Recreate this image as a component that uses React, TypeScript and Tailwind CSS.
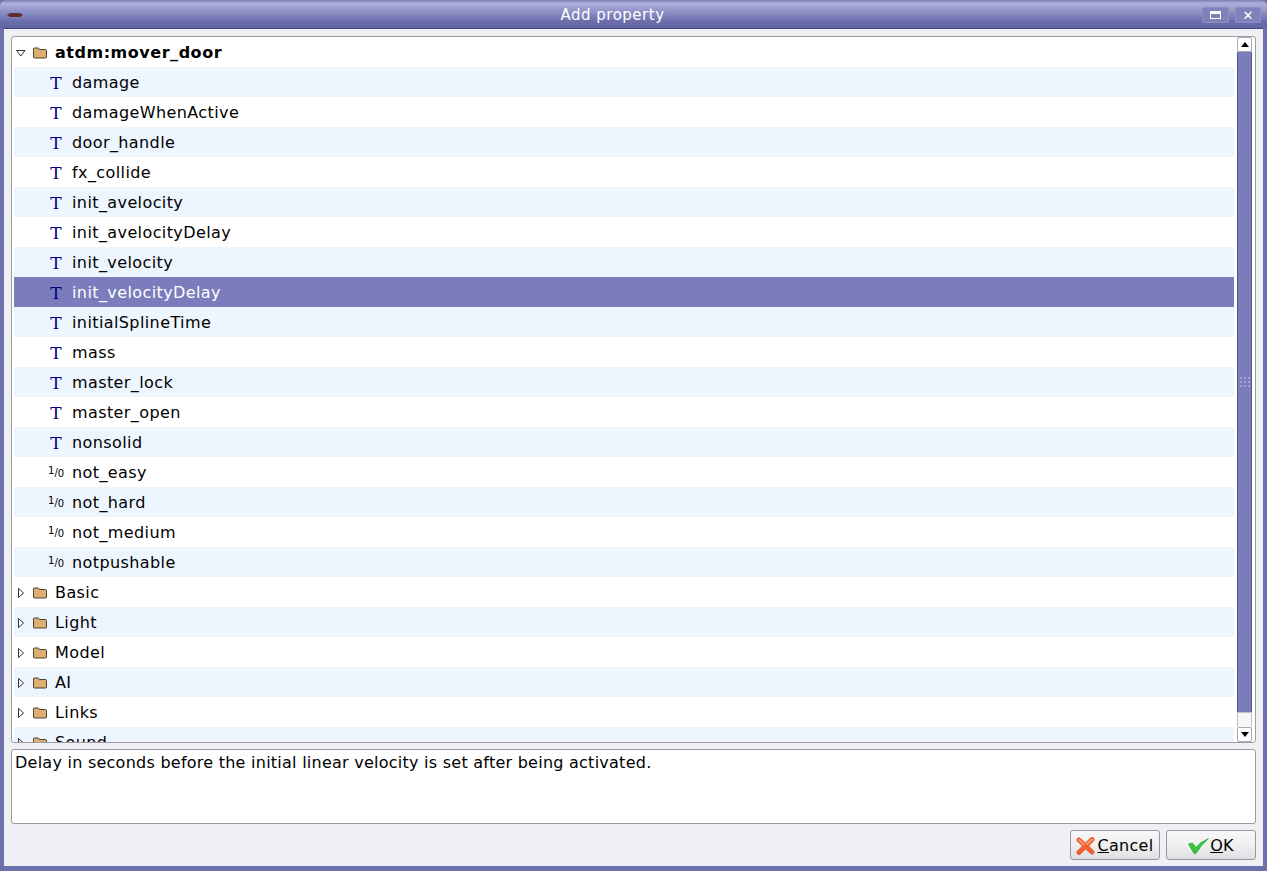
const font = "font-['DejaVu_Sans',sans-serif]";

type Prop = { name: string; kind: "text" | "bool" };

const props: Prop[] = [
  { name: "damage", kind: "text" },
  { name: "damageWhenActive", kind: "text" },
  { name: "door_handle", kind: "text" },
  { name: "fx_collide", kind: "text" },
  { name: "init_avelocity", kind: "text" },
  { name: "init_avelocityDelay", kind: "text" },
  { name: "init_velocity", kind: "text" },
  { name: "init_velocityDelay", kind: "text" },
  { name: "initialSplineTime", kind: "text" },
  { name: "mass", kind: "text" },
  { name: "master_lock", kind: "text" },
  { name: "master_open", kind: "text" },
  { name: "nonsolid", kind: "text" },
  { name: "not_easy", kind: "bool" },
  { name: "not_hard", kind: "bool" },
  { name: "not_medium", kind: "bool" },
  { name: "notpushable", kind: "bool" },
];

const groups = ["Basic", "Light", "Model", "AI", "Links", "Sound"];

function Folder() {
  return (
    <svg width="16" height="14" viewBox="0 0 16 14" className="shrink-0">
      <path
        d="M1.5 4.5 V3 Q1.5 2 2.5 2 H6 Q7 2 7.5 3.5 H13.5 Q14.5 3.5 14.5 4.5 V11 Q14.5 12 13.5 12 H2.5 Q1.5 12 1.5 11 Z"
        fill="#dcae70"
        stroke="#4a4030"
        strokeWidth="1"
      />
    </svg>
  );
}

function Arrow({ open }: { open?: boolean }) {
  return (
    <svg width="10" height="10" viewBox="0 0 10 10" className="shrink-0">
      {open ? (
        <path d="M0.5 2.5 H9 L4.8 8 Z" fill="#fff" stroke="#333" />
      ) : (
        <path d="M2.5 0.5 V9.5 L7.5 5 Z" fill="#fff" stroke="#333" />
      )}
    </svg>
  );
}

function Row({ index, selected, children }: { index: number; selected?: boolean; children: React.ReactNode }) {
  const bg = selected ? "bg-[#7a7cbc] text-white" : index % 2 === 1 ? "bg-[#edf5fe] text-black" : "bg-white text-black";
  return <div className={`h-[30px] shrink-0 pt-[2px] flex items-center ${bg}`}>{children}</div>;
}

function TypeIcon({ kind }: { kind: Prop["kind"] }) {
  if (kind === "text") {
    return (
      <span className="w-4 ml-[34px] mr-[8px] text-center text-[#000080] text-[17px] leading-none tracking-normal font-['DejaVu_Serif',serif]">
        T
      </span>
    );
  }
  return (
    <span className="w-4 ml-[34px] mr-[8px] text-center text-black text-[10px] leading-none tracking-normal whitespace-nowrap">
      <span className="relative -top-[2px]">1</span>
      <span>/</span>
      <span className="relative top-[1px]">0</span>
    </span>
  );
}

function Scrollbar() {
  return (
    <div className="w-[15px] ml-[3px] shrink-0 flex flex-col items-stretch bg-[#f2f3f6]">
      <div className="h-[15px] shrink-0 bg-white border border-[#a9a9ae] rounded-[2px] flex items-center justify-center">
        <div className="w-0 h-0 border-x-[4px] border-x-transparent border-b-[5px] border-b-black" />
      </div>
      <div className="h-[660px] shrink-0 bg-[#7a7cbc] border-x border-[#55568f] flex items-center justify-center">
        <div className="grid grid-cols-3 gap-[2px]">
          {Array.from({ length: 9 }).map((_, i) => (
            <div key={i} className="w-[2px] h-[2px] bg-[#9ea0d8]" />
          ))}
        </div>
      </div>
      <div className="flex-1 bg-[#f7f7fa] border-x border-t border-[#c0c0c6]" />
      <div className="h-[15px] shrink-0 bg-white border border-[#a9a9ae] rounded-[2px] flex items-center justify-center">
        <div className="w-0 h-0 border-x-[4px] border-x-transparent border-t-[5px] border-t-black" />
      </div>
    </div>
  );
}

function CrossIcon() {
  return (
    <svg width="19" height="18" viewBox="0 0 19 18" className="shrink-0 mr-[2px]">
      <path d="M3 3 L16 15 M16 2.5 L3 15.5" stroke="#ee5f34" strokeWidth="5" strokeLinecap="round" />
      <path d="M3 3 L8 7.5 M16 2.5 L11 7" stroke="#f79a6e" strokeWidth="2" strokeLinecap="round" />
    </svg>
  );
}

function CheckIcon() {
  return (
    <svg width="21" height="16" viewBox="0 0 21 16" className="shrink-0 mr-[1px]">
      <path d="M0.5 6 L4.5 5 L8 9.5 Q12 4 20.5 0.5 Q13 7 8 15.5 L6 15.5 Z" fill="#34c83c" stroke="#1e9a2a" strokeWidth="0.6" />
    </svg>
  );
}

function DialogButton({ children }: { children: React.ReactNode }) {
  return (
    <button className="w-[90px] h-[30px] pt-[2px] border border-[#98989e] rounded-[3px] bg-gradient-to-b from-[#f8f8f8] via-[#f0f0f0] to-[#dedfe2] flex items-center justify-center text-[16px] tracking-[0.3px] text-black">
      {children}
    </button>
  );
}

export default function App() {
  return (
    <div className={`w-[1267px] h-[871px] overflow-hidden flex flex-col bg-[#6d70ac] ${font}`}>
      {/* Title bar */}
      <div className="h-[28px] shrink-0 rounded-t-[6px] bg-[linear-gradient(180deg,#7c7eb4_0%,#aeb0da_12%,#9092c8_40%,#6c6fab_75%,#6164a2_100%)] flex items-center relative">
        <svg width="16" height="8" viewBox="0 0 16 8" className="ml-[7px] mt-[2px]">
          <path d="M0 4 L3 2 H13 L16 4 L13 6 H3 Z" fill="#5b2f2f" />
        </svg>
        <div className="absolute left-0 w-[1225px] top-[6px] text-center text-[15px] leading-[18px] text-white tracking-[0.5px]">
          Add property
        </div>
        <div className="ml-auto mr-[6px] mt-[2px] flex gap-[6px]">
          <div className="w-[27px] h-[16px] rounded-[2px] border border-[#8d8fc4] bg-[#7f82ba] flex items-center justify-center">
            <div className="w-[11px] h-[8px] border border-white border-t-[3px]" />
          </div>
          <div className="w-[26px] h-[16px] rounded-[2px] border border-[#8d8fc4] bg-[#7f82ba] flex items-center justify-center text-white text-[13px] leading-none font-bold">
            ✕
          </div>
        </div>
      </div>

      {/* Client area */}
      <div className="flex-1 mx-[4px] mb-[5px] min-h-0 border-t border-[#45477c] bg-[#eff0f4] px-[7px] pt-[7px] flex flex-col">
        <div className="h-[707px] shrink-0 flex border border-[#9b9ba0] rounded-[3px] bg-white pl-[2px] pr-[3px] overflow-hidden">
          <div className="w-[1220px] shrink-0 flex flex-col text-[16px] tracking-[0.4px] overflow-hidden">
            <Row index={0}>
              <div className="w-[14px] flex justify-center"><Arrow open /></div>
              <div className="ml-[4px] mr-[7px]"><Folder /></div>
              <span className="font-bold tracking-[0.53px]">atdm:mover_door</span>
            </Row>
            {props.map((p, i) => (
              <Row key={p.name} index={i + 1} selected={p.name === "init_velocityDelay"}>
                <TypeIcon kind={p.kind} />
                <span>{p.name}</span>
              </Row>
            ))}
            {groups.map((g, i) => (
              <Row key={g} index={i + 18}>
                <div className="w-[14px] flex justify-center"><Arrow /></div>
                <div className="ml-[4px] mr-[7px]"><Folder /></div>
                <span>{g}</span>
              </Row>
            ))}
          </div>
          <Scrollbar />
        </div>

        {/* Description */}
        <div className="h-[75px] shrink-0 mt-[6px] border border-[#9b9ba0] rounded-[3px] bg-white pl-[3px] pt-[3px] text-[16px] tracking-[0.25px] leading-[19px] text-black">
          Delay in seconds before the initial linear velocity is set after being activated.
        </div>

        {/* Buttons */}
        <div className="mt-[6px] flex justify-end gap-[6px]">
          <DialogButton>
            <CrossIcon />
            <span><span className="underline">C</span>ancel</span>
          </DialogButton>
          <DialogButton>
            <CheckIcon />
            <span><span className="underline">O</span>K</span>
          </DialogButton>
        </div>
      </div>
    </div>
  );
}
